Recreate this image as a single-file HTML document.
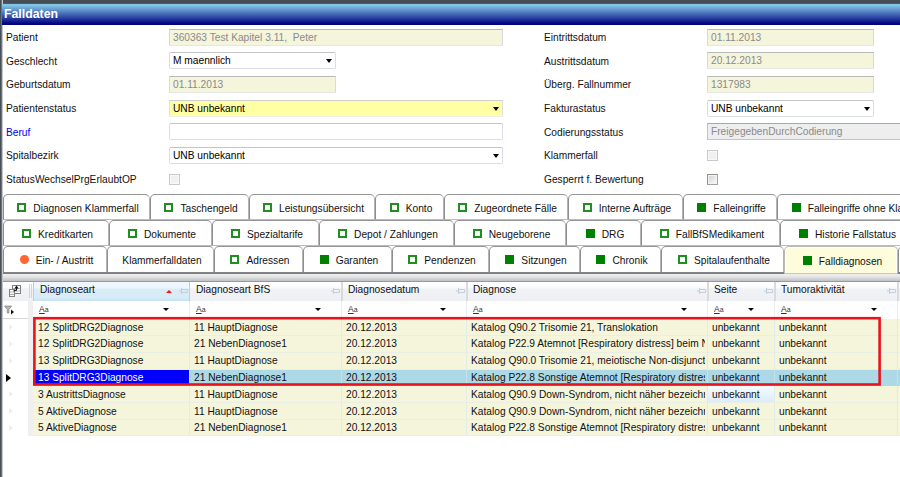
<!DOCTYPE html>
<html lang="de"><head><meta charset="utf-8"><title>Falldaten</title>
<style>

html,body{margin:0;padding:0;}
body{width:900px;height:477px;overflow:hidden;background:#fff;position:relative;font-family:"Liberation Sans", Arial, sans-serif;font-size:10.2px;color:#000;}
.abs{position:absolute;}
#topb{left:0;top:0;width:900px;height:4px;background:linear-gradient(to bottom,#444e54 0,#444e54 3px,#54575c 3px,#54575c 4px);}
#leftb{left:0;top:0;width:3px;height:477px;background:linear-gradient(to right,#464e56 0,#464e56 1px,#717378 1px,#717378 2px,#c4c4c9 2px,#c4c4c9 3px);}
#hdr{z-index:2;left:2px;top:4px;width:898px;height:21px;background:linear-gradient(to bottom,#82c4e4 0,#84c8e8 1px,#000080 20px,#000080 21px);}
#hdr span{position:absolute;left:2px;top:3px;font-size:12.3px;font-weight:bold;color:#fff;line-height:14px;}
.lbl{position:absolute;height:16px;line-height:16px;white-space:nowrap;color:#111;}
.fld{position:absolute;box-sizing:border-box;height:17px;border:1px solid #dadada;border-top-color:#b8b8b8;border-bottom-color:#e6e6e2;line-height:15px;padding-left:3px;white-space:pre;overflow:hidden;}
.ro{background:#f5f5dc;color:#8a8a8a;}
.wh{background:#fff;color:#000;border-color:#d9dde6;border-top-color:#c2c4ca;border-radius:2px;}
.ye{background:#ffffa4;color:#000;border-color:#e2e2e6;border-top-color:#cfcfcf;border-bottom-color:#efefe6;}
.ye:after{content:'';position:absolute;right:12px;top:0;width:1px;height:100%;background:#ffffd2;}
.gr{background:#eeeeee;color:#8a8a8a;border-color:#c4c4c4;border-top-color:#a8a8a8;}
.arr{position:absolute;right:3px;top:6px;width:0;height:0;border-left:3px solid transparent;border-right:3px solid transparent;border-top:4px solid #000;}
.cb{position:absolute;box-sizing:border-box;width:11px;height:11px;border:1px solid #c6c9d0;background:#f0f0f0;box-shadow:inset 0 0 0 1px #f8f8f8;}
.tab{position:absolute;box-sizing:border-box;height:26px;border:1px solid #8e8e8e;border-right-color:#b4b4b4;border-top-color:#959595;border-bottom:1px solid #bcbcbc;border-radius:5px 5px 0 0;background:#fff;display:flex;align-items:center;justify-content:center;padding-left:3px;white-space:nowrap;color:#111;}
.tt{position:relative;top:1px;}
.tab.r3{border-bottom:none;}
.tab.act{background:#fdfddc;box-shadow:inset 1px 1px 0 #fff,inset -1px 0 0 #fff;border-color:#b9b9b9;border-bottom:1px solid #c6c6c6;height:28px;z-index:3;padding-bottom:0;padding-top:1px;}
.ic{display:inline-block;box-sizing:border-box;width:9px;height:9px;margin-right:7px;flex:none;}
.ic.o{border:2px solid #1f8f1f;background:#fff;}
.ic.f{background:#008000;}
.ic.c{background:#ff6633;border-radius:50%;}
.hline{position:absolute;left:2px;width:898px;}

</style></head><body>
<div class="abs" id="hdr"><span>Falldaten</span></div>
<div class="lbl" style="left:6px;top:30px">Patient</div>
<div class="lbl" style="left:6px;top:54px">Geschlecht</div>
<div class="lbl" style="left:6px;top:77px">Geburtsdatum</div>
<div class="lbl" style="left:6px;top:101px">Patientenstatus</div>
<div class="lbl" style="left:6px;top:125px;color:#0000ee">Beruf</div>
<div class="lbl" style="left:6px;top:148px">Spitalbezirk</div>
<div class="lbl" style="left:6px;top:172px">StatusWechselPrgErlaubtOP</div>
<div class="lbl" style="left:544px;top:30px">Eintrittsdatum</div>
<div class="lbl" style="left:544px;top:54px">Austrittsdatum</div>
<div class="lbl" style="left:544px;top:77px">Überg. Fallnummer</div>
<div class="lbl" style="left:544px;top:101px">Fakturastatus</div>
<div class="lbl" style="left:544px;top:125px">Codierungsstatus</div>
<div class="lbl" style="left:544px;top:148px">Klammerfall</div>
<div class="lbl" style="left:544px;top:172px">Gesperrt f. Bewertung</div>
<div class="fld ro" style="left:169px;top:29.0px;width:334px">360363 Test Kapitel 3.11,  Peter</div>
<div class="fld wh" style="left:169px;top:52.0px;width:167px">M maennlich<i class="arr"></i></div>
<div class="fld ro" style="left:169px;top:76.0px;width:167px">01.11.2013</div>
<div class="fld ye" style="left:169px;top:100.0px;width:334px">UNB unbekannt<i class="arr"></i></div>
<div class="fld wh" style="left:169px;top:123.0px;width:334px"></div>
<div class="fld wh" style="left:169px;top:147.0px;width:334px">UNB unbekannt<i class="arr"></i></div>
<div class="cb" style="left:169px;top:174px"></div>
<div class="fld ro" style="left:707px;top:29.0px;width:167px">01.11.2013</div>
<div class="fld ro" style="left:707px;top:52.0px;width:167px">20.12.2013</div>
<div class="fld ro" style="left:707px;top:76.0px;width:167px">1317983</div>
<div class="fld wh" style="left:707px;top:100.0px;width:167px">UNB unbekannt<i class="arr"></i></div>
<div class="fld gr" style="left:707px;top:123.0px;width:200px">FreigegebenDurchCodierung</div>
<div class="cb" style="left:707px;top:150px"></div>
<div class="cb" style="left:707px;top:174px;border-color:#8f8f8f #a4a4a4 #a4a4a4 #8f8f8f;background:linear-gradient(135deg,#ccd0d6,#f4f4f4 80%);box-shadow:inset 0 0 0 1px #f4f4f4"></div>
<div class="tab" style="left:3px;top:194px;width:147px"><i class="ic o"></i><span class="tt">Diagnosen Klammerfall</span></div>
<div class="tab" style="left:150px;top:194px;width:99px"><i class="ic o"></i><span class="tt">Taschengeld</span></div>
<div class="tab" style="left:249px;top:194px;width:126px"><i class="ic o"></i><span class="tt">Leistungsübersicht</span></div>
<div class="tab" style="left:375px;top:194px;width:69px"><i class="ic o"></i><span class="tt">Konto</span></div>
<div class="tab" style="left:444px;top:194px;width:124px"><i class="ic o"></i><span class="tt">Zugeordnete Fälle</span></div>
<div class="tab" style="left:568px;top:194px;width:115px"><i class="ic o"></i><span class="tt">Interne Aufträge</span></div>
<div class="tab" style="left:683px;top:194px;width:94px"><i class="ic f"></i><span class="tt">Falleingriffe</span></div>
<div class="tab" style="left:777px;top:194px;width:177px"><i class="ic f"></i><span class="tt">Falleingriffe ohne Klammerfall</span></div>
<div class="tab" style="left:3px;top:220px;width:106px"><i class="ic o"></i><span class="tt">Kreditkarten</span></div>
<div class="tab" style="left:109px;top:220px;width:103px"><i class="ic o"></i><span class="tt">Dokumente</span></div>
<div class="tab" style="left:212px;top:220px;width:107px"><i class="ic o"></i><span class="tt">Spezialtarife</span></div>
<div class="tab" style="left:319px;top:220px;width:135px"><i class="ic o"></i><span class="tt">Depot / Zahlungen</span></div>
<div class="tab" style="left:454px;top:220px;width:112px"><i class="ic o"></i><span class="tt">Neugeborene</span></div>
<div class="tab" style="left:566px;top:220px;width:75px"><i class="ic f"></i><span class="tt">DRG</span></div>
<div class="tab" style="left:641px;top:220px;width:139px"><i class="ic o"></i><span class="tt">FallBfSMedikament</span></div>
<div class="tab" style="left:780px;top:220px;width:132px"><i class="ic f"></i><span class="tt">Historie Fallstatus</span></div>
<div class="tab r3" style="left:3px;top:246px;width:104px"><i class="ic c"></i><span class="tt">Ein- / Austritt</span></div>
<div class="tab r3" style="left:107px;top:246px;width:107px"><span class="tt">Klammerfalldaten</span></div>
<div class="tab r3" style="left:214px;top:246px;width:89px"><i class="ic o"></i><span class="tt">Adressen</span></div>
<div class="tab r3" style="left:303px;top:246px;width:89px"><i class="ic f"></i><span class="tt">Garanten</span></div>
<div class="tab r3" style="left:392px;top:246px;width:97px"><i class="ic o"></i><span class="tt">Pendenzen</span></div>
<div class="tab r3" style="left:489px;top:246px;width:91px"><i class="ic f"></i><span class="tt">Sitzungen</span></div>
<div class="tab r3" style="left:580px;top:246px;width:81px"><i class="ic f"></i><span class="tt">Chronik</span></div>
<div class="tab r3" style="left:661px;top:246px;width:123px"><i class="ic o"></i><span class="tt">Spitalaufenthalte</span></div>
<div class="tab act r3" style="left:784px;top:246px;width:114px"><i class="ic f"></i><span class="tt">Falldiagnosen</span></div>
<div class="tab r3" style="left:898px;top:246px;width:102px"><i class="ic o"></i><span class="tt">Fallhistorie</span></div>
<style>

#tabline{left:2px;top:272px;width:898px;height:2px;background:linear-gradient(to bottom,#85878b,#7a7c80);}
#band{left:2px;top:274px;width:898px;height:8px;background:linear-gradient(to bottom,#ececec 0,#eeeeee 1px,#e3e3e4 3px,#d0d1d3 5px,#bfc0c4 7px,#9599a5 7px,#9599a5 8px);}
#ghead{left:2px;top:282px;width:898px;height:19px;background:linear-gradient(to bottom,#ffffff 0,#fcfcfd 5px,#f0f2f5 7px,#eef0f4 18px);}
.hc{position:absolute;top:282px;height:19px;box-sizing:border-box;border-right:2px solid #d9dadd;line-height:16px;padding-left:6px;color:#111;white-space:nowrap;overflow:hidden;}
.hc.sel{background:linear-gradient(to bottom,#eef7fc 0,#ecf6fc 6px,#daecf7 7px,#d8ebf7 16px,#c9e5f5 18px);border:1px solid #a3d6f5;border-top:none;border-bottom:none;padding-left:6px;line-height:16px;height:19px;}
.pin{position:absolute;right:1px;top:6px;width:9px;height:6px;}
.frow{left:2px;top:301px;width:898px;height:18px;background:#fff;}
.fc{position:absolute;top:301px;height:18px;box-sizing:border-box;border-right:1px solid #ececec;font-size:7px;line-height:17px;padding-left:6px;color:#333;}
.fc u{font-size:8.5px;}
.fc u{text-decoration:underline;}
.fa{position:absolute;right:20.5px;top:7px;width:0;height:0;border-left:3px solid transparent;border-right:3px solid transparent;border-top:3px solid #000;}
.grw{position:absolute;left:33px;width:867px;height:17px;background:#f5f5dc;}
.gc{position:absolute;top:0;height:100%;box-sizing:border-box;line-height:18px;padding-left:4px;padding-right:2px;white-space:nowrap;border-right:1px solid #e3ebe6;border-bottom:1px solid #e9efe4;color:#111;}
.gc span{display:block;position:relative;overflow:hidden;height:16px;line-height:18px;}
#gutter{left:28px;top:300px;width:5px;height:136px;background:#efefef;}
#redbox{left:33px;top:317px;width:847px;height:68px;box-sizing:border-box;border:2px solid #e8141c;}
.rsel{position:absolute;left:9px;width:0;height:0;border-top:3px solid transparent;border-bottom:3px solid transparent;border-left:4px solid #efefef;}

</style>
<div class="abs" id="tabline"></div><div class="abs" id="band"></div><div class="abs" id="ghead"></div>
<div class="hc sel" style="left:33px;width:157px">Diagnoseart<i class="abs" style="right:17px;top:8px;width:0;height:0;border-left:3px solid transparent;border-right:3px solid transparent;border-bottom:3px solid #fb1216"></i><svg class="pin" width="9" height="6" viewBox="0 0 9 6"><path d="M0 3H2.5M2.5 0V6M2.5 1.5H8.5V4.5H2.5" fill="none" stroke="#c2cedc" stroke-width="1"/></svg></div>
<div class="hc" style="left:190px;width:153px">Diagnoseart BfS<svg class="pin" width="9" height="6" viewBox="0 0 9 6"><path d="M0 3H2.5M2.5 0V6M2.5 1.5H8.5V4.5H2.5" fill="none" stroke="#c2cedc" stroke-width="1"/></svg></div>
<div class="hc" style="left:342px;width:126px">Diagnosedatum<svg class="pin" width="9" height="6" viewBox="0 0 9 6"><path d="M0 3H2.5M2.5 0V6M2.5 1.5H8.5V4.5H2.5" fill="none" stroke="#c2cedc" stroke-width="1"/></svg></div>
<div class="hc" style="left:467px;width:242px">Diagnose<svg class="pin" width="9" height="6" viewBox="0 0 9 6"><path d="M0 3H2.5M2.5 0V6M2.5 1.5H8.5V4.5H2.5" fill="none" stroke="#c2cedc" stroke-width="1"/></svg></div>
<div class="hc" style="left:708px;width:68px">Seite<svg class="pin" width="9" height="6" viewBox="0 0 9 6"><path d="M0 3H2.5M2.5 0V6M2.5 1.5H8.5V4.5H2.5" fill="none" stroke="#c2cedc" stroke-width="1"/></svg></div>
<div class="hc" style="left:775px;width:124px">Tumoraktivität<svg class="pin" width="9" height="6" viewBox="0 0 9 6"><path d="M0 3H2.5M2.5 0V6M2.5 1.5H8.5V4.5H2.5" fill="none" stroke="#c2cedc" stroke-width="1"/></svg></div>
<div class="hc" style="left:898px;width:63px">Tumorart<svg class="pin" width="9" height="6" viewBox="0 0 9 6"><path d="M0 3H2.5M2.5 0V6M2.5 1.5H8.5V4.5H2.5" fill="none" stroke="#c2cedc" stroke-width="1"/></svg></div>
<div class="abs frow"></div>
<div class="fc" style="left:33px;width:157px"><u>A</u>a<i class="fa"></i></div>
<div class="fc" style="left:190px;width:152px"><u>A</u>a<i class="fa"></i></div>
<div class="fc" style="left:342px;width:125px"><u>A</u>a<i class="fa"></i></div>
<div class="fc" style="left:467px;width:241px"><u>A</u>a<i class="fa"></i></div>
<div class="fc" style="left:708px;width:67px"><u>A</u>a<i class="fa"></i></div>
<div class="fc" style="left:775px;width:123px"><u>A</u>a<i class="fa"></i></div>
<div class="fc" style="left:898px;width:62px"><u>A</u>a<i class="fa"></i></div>
<svg class="abs" style="left:2px;top:282px" width="32" height="18" viewBox="2 282 32 18"><path d="M29.5 284V298M31.5 284V298" stroke="#d2d4d8" stroke-width="1" fill="none"/><rect x="12.5" y="285.5" width="8" height="8" fill="#fff" stroke="#808080"/><path d="M13 288.5H20M13 291H20" stroke="#b8b8b8" stroke-width="1" fill="none"/><rect x="9.5" y="289.5" width="5" height="7" fill="#fff" stroke="#808080"/><path d="M10 292H14M10 294.5H14" stroke="#a8a8a8" stroke-width="1" fill="none"/><path d="M16.5 285.6L14.4 288.6H18.6Z" fill="#111"/><path d="M16.5 288V290L13.5 291" stroke="#111" stroke-width="1.1" fill="none"/></svg>
<svg class="abs" style="left:2px;top:300px" width="26" height="18" viewBox="2 300 26 18"><path d="M4.6 306H11.6L8.9 309.6V313H7.3V309.6Z" fill="#b4b4b4" stroke="#8a8a8a" stroke-width="0.8"/><path d="M11 309.4L14 312L11 314.6Z" fill="#111"/></svg>
<div class="abs" style="left:2px;top:318px;width:26px;height:1px;background:#d6d6d6"></div>
<div class="abs" id="gutter"></div>
<div class="grw" style="top:319px;height:17px">
<div class="gc" style="left:0px;width:157px;padding-left:5px"><span>12 SplitDRG2Diagnose</span></div>
<div class="gc" style="left:157px;width:152px"><span>11 HauptDiagnose</span></div>
<div class="gc" style="left:309px;width:125px"><span>20.12.2013</span></div>
<div class="gc" style="left:434px;width:241px"><span>Katalog Q90.2 Trisomie 21, Translokation</span></div>
<div class="gc" style="left:675px;width:67px"><span>unbekannt</span></div>
<div class="gc" style="left:742px;width:123px"><span>unbekannt</span></div>
<div class="gc" style="left:865px;width:62px"><span></span></div>
</div>
<div class="rsel" style="top:324px"></div>
<div class="grw" style="top:336px;height:17px">
<div class="gc" style="left:0px;width:157px;padding-left:5px"><span style="top:-1px">12 SplitDRG2Diagnose</span></div>
<div class="gc" style="left:157px;width:152px"><span style="top:-1px">21 NebenDiagnose1</span></div>
<div class="gc" style="left:309px;width:125px"><span style="top:-1px">20.12.2013</span></div>
<div class="gc" style="left:434px;width:241px"><span style="top:-1px">Katalog P22.9 Atemnot [Respiratory distress] beim Neugeborenen</span></div>
<div class="gc" style="left:675px;width:67px"><span style="top:-1px">unbekannt</span></div>
<div class="gc" style="left:742px;width:123px"><span style="top:-1px">unbekannt</span></div>
<div class="gc" style="left:865px;width:62px"><span style="top:-1px"></span></div>
</div>
<div class="rsel" style="top:341px"></div>
<div class="grw" style="top:353px;height:17px">
<div class="gc" style="left:0px;width:157px;padding-left:5px"><span style="top:-1px">13 SplitDRG3Diagnose</span></div>
<div class="gc" style="left:157px;width:152px"><span style="top:-1px">11 HauptDiagnose</span></div>
<div class="gc" style="left:309px;width:125px"><span style="top:-1px">20.12.2013</span></div>
<div class="gc" style="left:434px;width:241px"><span style="top:-1px">Katalog Q90.0 Trisomie 21, meiotische Non-disjunction</span></div>
<div class="gc" style="left:675px;width:67px"><span style="top:-1px">unbekannt</span></div>
<div class="gc" style="left:742px;width:123px"><span style="top:-1px">unbekannt</span></div>
<div class="gc" style="left:865px;width:62px"><span style="top:-1px"></span></div>
</div>
<div class="rsel" style="top:358px"></div>
<div class="grw" style="top:370px;height:16px;background:#add8e6">
<div class="gc" style="left:0px;width:157px;padding-left:5px;background:#0000fc;color:#fff;border-right-color:#c4e2ec;border-bottom-color:#add8e6"><span style="top:-1px">13 SplitDRG3Diagnose</span></div>
<div class="gc" style="left:157px;width:152px;border-right-color:#c4e2ec;border-bottom-color:#add8e6"><span style="top:-1px">21 NebenDiagnose1</span></div>
<div class="gc" style="left:309px;width:125px;border-right-color:#c4e2ec;border-bottom-color:#add8e6"><span style="top:-1px">20.12.2013</span></div>
<div class="gc" style="left:434px;width:241px;border-right-color:#c4e2ec;border-bottom-color:#add8e6"><span style="top:-1px">Katalog P22.8 Sonstige Atemnot [Respiratory distress] beim Neugeborenen</span></div>
<div class="gc" style="left:675px;width:67px;border-right-color:#c4e2ec;border-bottom-color:#add8e6"><span style="top:-1px">unbekannt</span></div>
<div class="gc" style="left:742px;width:123px;border-right-color:#c4e2ec;border-bottom-color:#add8e6"><span style="top:-1px">unbekannt</span></div>
<div class="gc" style="left:865px;width:62px;border-right-color:#c4e2ec;border-bottom-color:#add8e6"><span style="top:-1px"></span></div>
</div>
<div class="abs" style="left:6px;top:374px;width:0;height:0;border-top:4px solid transparent;border-bottom:4px solid transparent;border-left:5px solid #000"></div>
<div class="grw" style="top:386px;height:17px">
<div class="gc" style="left:0px;width:157px;padding-left:5px"><span>3 AustrittsDiagnose</span></div>
<div class="gc" style="left:157px;width:152px"><span>11 HauptDiagnose</span></div>
<div class="gc" style="left:309px;width:125px"><span>20.12.2013</span></div>
<div class="gc" style="left:434px;width:241px"><span>Katalog Q90.9 Down-Syndrom, nicht näher bezeichnet</span></div>
<div class="gc" style="left:675px;width:67px;background:linear-gradient(to bottom,#f6fbff,#dcecfb)"><span>unbekannt</span></div>
<div class="gc" style="left:742px;width:123px"><span>unbekannt</span></div>
<div class="gc" style="left:865px;width:62px"><span></span></div>
</div>
<div class="rsel" style="top:391px"></div>
<div class="grw" style="top:403px;height:17px">
<div class="gc" style="left:0px;width:157px;padding-left:5px"><span>5 AktiveDiagnose</span></div>
<div class="gc" style="left:157px;width:152px"><span>11 HauptDiagnose</span></div>
<div class="gc" style="left:309px;width:125px"><span>20.12.2013</span></div>
<div class="gc" style="left:434px;width:241px"><span>Katalog Q90.9 Down-Syndrom, nicht näher bezeichnet</span></div>
<div class="gc" style="left:675px;width:67px"><span>unbekannt</span></div>
<div class="gc" style="left:742px;width:123px"><span>unbekannt</span></div>
<div class="gc" style="left:865px;width:62px"><span></span></div>
</div>
<div class="rsel" style="top:408px"></div>
<div class="grw" style="top:420px;height:16px">
<div class="gc" style="left:0px;width:157px;padding-left:5px"><span style="top:-1px">5 AktiveDiagnose</span></div>
<div class="gc" style="left:157px;width:152px"><span style="top:-1px">21 NebenDiagnose1</span></div>
<div class="gc" style="left:309px;width:125px"><span style="top:-1px">20.12.2013</span></div>
<div class="gc" style="left:434px;width:241px"><span style="top:-1px">Katalog P22.8 Sonstige Atemnot [Respiratory distress] beim Neugeborenen</span></div>
<div class="gc" style="left:675px;width:67px"><span style="top:-1px">unbekannt</span></div>
<div class="gc" style="left:742px;width:123px"><span style="top:-1px">unbekannt</span></div>
<div class="gc" style="left:865px;width:62px"><span style="top:-1px"></span></div>
</div>
<div class="rsel" style="top:425px"></div>
<svg class="abs" style="left:30px;top:314px" width="856" height="76" viewBox="30 314 856 76"><rect x="34.4" y="318.2" width="845.2" height="66.3" fill="none" stroke="#e9131d" stroke-width="2.6"/></svg>
<div class="abs" id="topb"></div><div class="abs" id="leftb"></div>
</body></html>
